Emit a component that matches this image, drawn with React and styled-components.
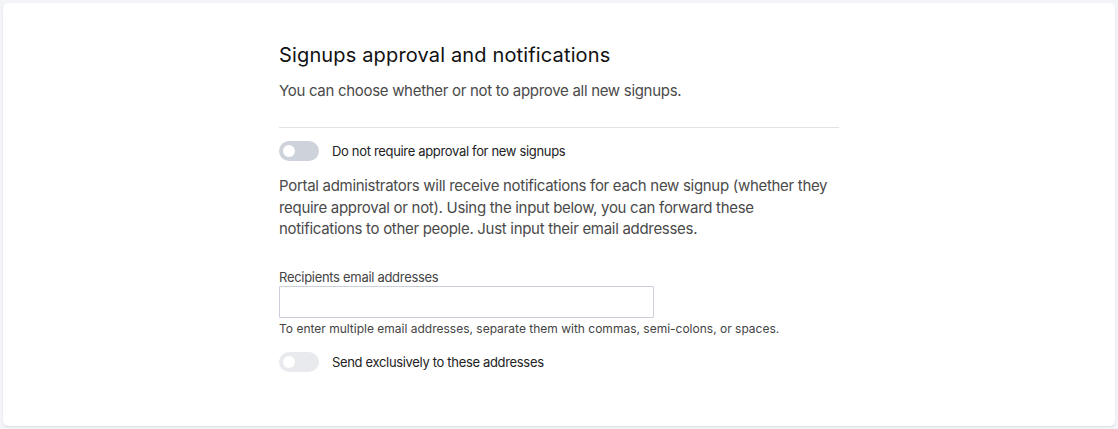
import React from "react";
import styled, { createGlobalStyle } from "styled-components";

const Global = createGlobalStyle`
  html, body { margin: 0; padding: 0; background: #f3f4f8; }
  body { font-family: Inter, "Liberation Sans", Arial, sans-serif; }
  * { box-sizing: border-box; }
`;

const Page = styled.div`
  padding: 3px;
  width: 1118px;
  height: 429px;
`;

const Card = styled.div`
  background: #ffffff;
  border-radius: 5px;
  box-shadow: 0 1px 2px rgba(40, 50, 80, 0.12);
  height: 423px;
  display: flex;
  justify-content: center;
  padding-top: 40px;
`;

const Column = styled.div`
  width: 560px;
  display: flex;
  flex-direction: column;
`;

const Title = styled.h2`
  margin: 0;
  font-size: 20px;
  font-weight: 400;
  color: #111;
  line-height: 24px;
  letter-spacing: 0.15px;
`;

const Lead = styled.p`
  margin: 14px 0 0;
  font-size: 15px;
  color: #4a4a4a;
  line-height: 20px;
  letter-spacing: -0.3px;
`;

const Divider = styled.hr`
  border: 0;
  border-top: 1px solid #e2e3e8;
  margin: 26px 0 13px;
  width: 100%;
`;

const ToggleRow = styled.label`
  display: flex;
  align-items: center;
  gap: 13px;
  font-size: 13px;
  color: #222;
  height: 20px;
  letter-spacing: -0.33px;
`;

const Switch = styled.span`
  width: 40px;
  height: 20px;
  border-radius: 10px;
  background: ${(p) => (p.$muted ? "#e8eaee" : "#cdd2db")};
  display: flex;
  align-items: center;
  padding-left: 4px;
  flex: none;
  &::before {
    content: "";
    width: 12px;
    height: 12px;
    border-radius: 50%;
    background: #fff;
  }
`;

const Body = styled.p`
  margin: 14px 0 0;
  font-size: 15px;
  color: #4a4a4a;
  line-height: 21.5px;
  letter-spacing: -0.3px;
`;

const FieldLabel = styled.div`
  margin-top: 29px;
  font-size: 13px;
  color: #444;
  line-height: 16px;
  letter-spacing: -0.3px;
`;

const Input = styled.input`
  margin-top: 1px;
  width: 375px;
  height: 32px;
  border: 1px solid #cbcedb;
  border-radius: 1px;
  background: #fff;
  font: inherit;
  outline: none;
`;

const Help = styled.div`
  margin-top: 3px;
  font-size: 12px;
  color: #444;
  line-height: 15px;
  margin-bottom: 16px;
`;

export default function App() {
  return (
    <Page>
      <Global />
      <Card>
        <Column>
          <Title>Signups approval and notifications</Title>
          <Lead>You can choose whether or not to approve all new signups.</Lead>
          <Divider />
          <ToggleRow>
            <Switch />
            Do not require approval for new signups
          </ToggleRow>
          <Body>
            Portal administrators will receive notifications for each new signup (whether they
            require approval or not). Using the input below, you can forward these
            notifications to other people. Just input their email addresses.
          </Body>
          <FieldLabel>Recipients email addresses</FieldLabel>
          <Input type="text" />
          <Help>To enter multiple email addresses, separate them with commas, semi-colons, or spaces.</Help>
          <ToggleRow>
            <Switch $muted />
            Send exclusively to these addresses
          </ToggleRow>
        </Column>
      </Card>
    </Page>
  );
}
